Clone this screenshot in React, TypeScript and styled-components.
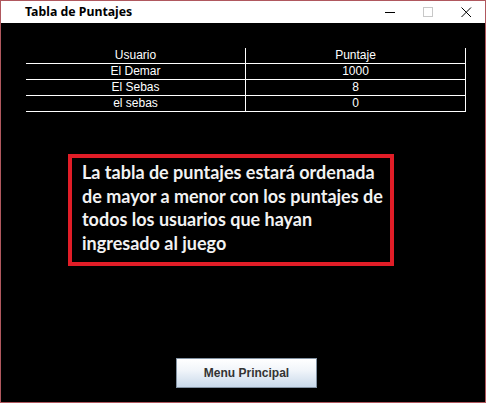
import React from "react";
import styled, { createGlobalStyle } from "styled-components";

const Global = createGlobalStyle`
  html, body { margin: 0; padding: 0; background: #000; }
  #root { width: 486px; height: 403px; }
`;

const Window = styled.div`
  box-sizing: border-box;
  width: 486px;
  height: 403px;
  border: 1px solid #b0585e;
  display: flex;
  flex-direction: column;
  background: #000;
`;

const TitleBar = styled.div`
  height: 22px;
  background: #fff;
  display: flex;
  align-items: center;
  padding-left: 24px;
  flex-shrink: 0;
`;

const Title = styled.div`
  flex: 1;
  font-family: "Noto Sans", sans-serif;
  font-weight: 700;
  font-size: 12.3px;
  color: #000;
  line-height: 22px;
`;

const Controls = styled.div`
  display: flex;
  height: 22px;
`;

const Ctrl = styled.div`
  width: 38px;
  height: 22px;
  display: flex;
  align-items: center;
  justify-content: center;
`;

const Content = styled.div`
  flex: 1;
  display: flex;
  flex-direction: column;
  padding-top: 25px;
`;

const Table = styled.div`
  margin-left: 25px;
  display: grid;
  grid-template-columns: 220px 220px;
  width: 440px;
`;

const Cell = styled.div`
  box-sizing: border-box;
  height: 16px;
  border-right: 1px solid #fff;
  border-bottom: 1px solid #fff;
  color: #fff;
  font-family: "Liberation Sans", Arial, sans-serif;
  font-size: 12px;
  line-height: 15px;
  text-align: center;
`;

const Note = styled.div`
  box-sizing: border-box;
  margin-top: 42px;
  margin-left: 67px;
  width: 326px;
  height: 112px;
  border: 4px solid #e11d27;
  padding: 3px 0 0 10px;
  color: #f2f2f2;
  font-family: Lato, "Open Sans", sans-serif;
  font-weight: 700;
  font-size: 18px;
  line-height: 23.5px;
  white-space: nowrap;
`;

const Button = styled.button`
  box-sizing: border-box;
  margin-top: 92px;
  margin-left: 175px;
  width: 141px;
  height: 30px;
  border: 1px solid #8393a3;
  background: linear-gradient(#ffffff 0%, #f1f5fa 40%, #c9d9ea 100%);
  color: #333;
  font-family: "Liberation Sans", Arial, sans-serif;
  font-weight: 700;
  font-size: 12px;
  padding: 0;
`;

const rows = [
  ["Usuario", "Puntaje"],
  ["El Demar", "1000"],
  ["El Sebas", "8"],
  ["el sebas", "0"],
];

export default function App() {
  return (
    <>
      <Global />
      <Window>
        <TitleBar>
          <Title>Tabla de Puntajes</Title>
          <Controls>
            <Ctrl>
              <svg width="11" height="11" viewBox="0 0 11 11">
                <line x1="0" y1="5.5" x2="10" y2="5.5" stroke="#000" strokeWidth="1" />
              </svg>
            </Ctrl>
            <Ctrl>
              <svg width="11" height="11" viewBox="0 0 11 11">
                <rect x="0.5" y="0.5" width="9" height="9" fill="none" stroke="#c8c8c8" strokeWidth="1" />
              </svg>
            </Ctrl>
            <Ctrl>
              <svg width="11" height="11" viewBox="0 0 11 11">
                <path d="M0.5 0.5 L10 10 M10 0.5 L0.5 10" stroke="#000" strokeWidth="1" />
              </svg>
            </Ctrl>
          </Controls>
        </TitleBar>
        <Content>
          <Table>
            {rows.map((r, i) => (
              <React.Fragment key={i}>
                <Cell>{r[0]}</Cell>
                <Cell>{r[1]}</Cell>
              </React.Fragment>
            ))}
          </Table>
          <Note>
            La tabla de puntajes estará ordenada
            <br />
            de mayor a menor con los puntajes de
            <br />
            todos los usuarios que hayan
            <br />
            ingresado al juego
          </Note>
          <Button>Menu Principal</Button>
        </Content>
      </Window>
    </>
  );
}
